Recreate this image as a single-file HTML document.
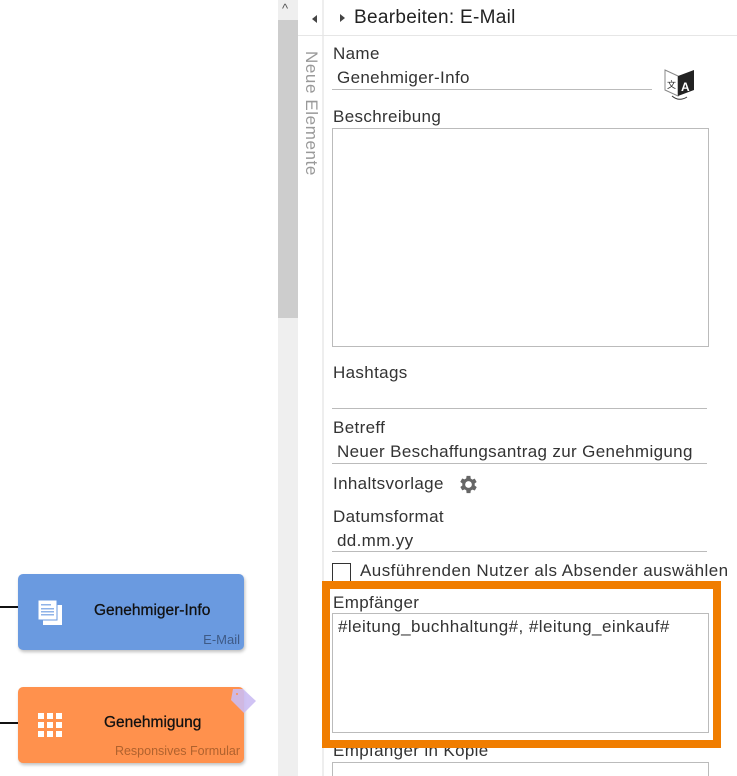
<!DOCTYPE html>
<html><head><meta charset="utf-8"><style>
*{margin:0;padding:0;box-sizing:border-box}
html,body{width:737px;height:776px;overflow:hidden}
body{background:#fff;font-family:"Liberation Sans",sans-serif;position:relative;color:#333}
.a{position:absolute}
.lbl{position:absolute;left:333px;font-size:17px;color:#333;line-height:20px;letter-spacing:.35px}
.val{position:absolute;left:337px;font-size:17px;color:#333;line-height:20px;letter-spacing:.35px}
.ul{position:absolute;left:332px;height:1px;background:#bbb}
.box{position:absolute;left:332px;border:1px solid #bbb;background:#fff}
</style></head><body>
<!-- canvas -->
<div class="a" style="left:0;top:606px;width:18px;height:2px;background:#111"></div>
<div class="a" style="left:18px;top:574px;width:226px;height:76px;background:#6a9ae0;border-radius:5px;box-shadow:1px 2px 3px rgba(0,0,0,.25)"></div>
<svg class="a" style="left:37px;top:600px" width="26" height="26" viewBox="0 0 26 26"><rect x="6" y="5" width="19" height="20" fill="#fff"/><rect x="1" y="0" width="19" height="20" fill="#fff" stroke="#6a9ae0" stroke-width="1"/><g fill="#8fb3e8"><rect x="4" y="4" width="10" height="1.5"/><rect x="4" y="8" width="13" height="1.5"/><rect x="4" y="11" width="13" height="1.5"/><rect x="4" y="14" width="13" height="1.5"/></g></svg>
<div class="a" style="left:94px;top:602px;font-size:15.5px;color:#111;-webkit-text-stroke:.3px #111">Genehmiger-Info</div>
<div class="a" style="right:497px;top:632px;font-size:13px;color:#3e5a86">E-Mail</div>

<div class="a" style="left:0;top:722px;width:18px;height:2px;background:#111"></div>
<div class="a" style="left:18px;top:687px;width:226px;height:76px;background:#ff914d;border-radius:5px;box-shadow:1px 2px 3px rgba(0,0,0,.25)"></div>
<svg class="a" style="left:231px;top:689px" width="26" height="26" viewBox="0 0 26 26"><path d="M2 0 L12 0 L25 12 L13 24 L0 11 Z" fill="#cbbcf3" opacity=".9"/><circle cx="6" cy="5" r="1" fill="#ff914d"/></svg>
<svg class="a" style="left:37px;top:713px" width="26" height="26" viewBox="0 0 26 26" fill="#fff"><rect x="1" y="0" width="6" height="6"/><rect x="10" y="0" width="6" height="6"/><rect x="19" y="0" width="6" height="6"/><rect x="1" y="9" width="6" height="6"/><rect x="10" y="9" width="6" height="6"/><rect x="19" y="9" width="6" height="6"/><rect x="1" y="18" width="6" height="6"/><rect x="10" y="18" width="6" height="6"/><rect x="19" y="18" width="6" height="6"/></svg>
<div class="a" style="left:104px;top:714px;font-size:15.5px;color:#111;-webkit-text-stroke:.3px #111">Genehmigung</div>
<div class="a" style="right:497px;top:744px;font-size:12.5px;color:#b0622e;white-space:nowrap">Responsives Formular</div>

<!-- scrollbar -->
<div class="a" style="left:278px;top:0;width:20px;height:776px;background:#efefef"></div>
<div class="a" style="left:278px;top:20px;width:20px;height:298px;background:#cdcdcd"></div>
<div class="a" style="left:282px;top:1px;font-size:13px;color:#555">&#94;</div>
<!-- sidebar -->
<div class="a" style="left:298px;top:0;width:26px;height:776px;background:#fff;border-right:2px solid #eee"></div>
<div class="a" style="left:298px;top:35px;width:439px;height:1px;background:#e6e6e6"></div>
<div class="a" style="left:312px;top:15px;width:0;height:0;border-top:4px solid transparent;border-bottom:4px solid transparent;border-right:5px solid #444"></div>
<div class="a" style="left:302px;top:51px;font-size:17px;color:#999;writing-mode:vertical-rl;line-height:18px;letter-spacing:.6px">Neue Elemente</div>
<!-- header -->
<div class="a" style="left:340px;top:14px;width:0;height:0;border-top:4px solid transparent;border-bottom:4px solid transparent;border-left:5px solid #444"></div>
<div class="a" style="left:354px;top:7px;font-size:19px;color:#222;letter-spacing:.3px">Bearbeiten: E-Mail</div>

<div class="lbl" style="top:44px">Name</div>
<div class="val" style="top:68px">Genehmiger-Info</div>
<div class="ul" style="top:89px;width:320px"></div>
<svg class="a" style="left:662px;top:66px" width="34" height="36" viewBox="0 0 34 36"><path d="M3 4 L16 10 L16 30 L3 24 Z" fill="#fff" stroke="#888" stroke-width="1"/><path d="M16 10 L32 4 L32 24 L16 30 Z" fill="#222"/><text x="19" y="25" font-size="12" font-weight="bold" fill="#fff" font-family="Liberation Sans">A</text><text x="5" y="22" font-size="9" fill="#222" font-family="Noto Sans CJK SC,sans-serif">文</text><path d="M10 30 Q17 36 25 31" fill="none" stroke="#333" stroke-width="1"/></svg>
<div class="lbl" style="top:107px">Beschreibung</div>
<div class="box" style="top:128px;width:377px;height:219px"></div>
<div class="lbl" style="top:363px">Hashtags</div>
<div class="ul" style="top:408px;width:375px"></div>
<div class="lbl" style="top:418px">Betreff</div>
<div class="val" style="top:442px">Neuer Beschaffungsantrag zur Genehmigung</div>
<div class="ul" style="top:463px;width:375px"></div>
<div class="lbl" style="top:474px">Inhaltsvorlage</div>
<svg class="a" style="left:457px;top:473px" width="23" height="23" viewBox="0 0 24 24"><path fill="#666" d="M19.4 13a7.5 7.5 0 000-2l2.1-1.6-2-3.5-2.5 1a7.6 7.6 0 00-1.7-1L15 3h-4l-.4 2.7a7.6 7.6 0 00-1.7 1l-2.5-1-2 3.5L6.6 11a7.5 7.5 0 000 2l-2.1 1.6 2 3.5 2.5-1a7.6 7.6 0 001.7 1L11 21h4l.4-2.7a7.6 7.6 0 001.7-1l2.5 1 2-3.5zM13 15.5a3.5 3.5 0 110-7 3.5 3.5 0 010 7z" transform="translate(-1 0)"/></svg>
<div class="lbl" style="top:507px">Datumsformat</div>
<div class="val" style="top:531px">dd.mm.yy</div>
<div class="ul" style="top:551px;width:375px"></div>
<div class="a" style="left:332px;top:563px;width:19px;height:19px;border:1px solid #333;background:#fff"></div>
<div class="a" style="left:360px;top:561px;font-size:17px;color:#333;letter-spacing:.45px;white-space:nowrap">Ausführenden Nutzer als Absender auswählen</div>

<div class="lbl" style="top:741px">Empfänger in Kopie</div>
<div class="box" style="top:762px;width:377px;height:30px"></div>
<div class="a" style="left:322px;top:581px;width:399px;height:167px;border:8px solid #f07d00;background:#fff"></div>
<div class="lbl" style="top:593px">Empfänger</div>
<div class="box" style="top:613px;width:377px;height:120px"></div>
<div class="a" style="left:338px;top:617px;font-size:17px;color:#333;letter-spacing:.45px">#leitung_buchhaltung#, #leitung_einkauf#</div>
</body></html>
